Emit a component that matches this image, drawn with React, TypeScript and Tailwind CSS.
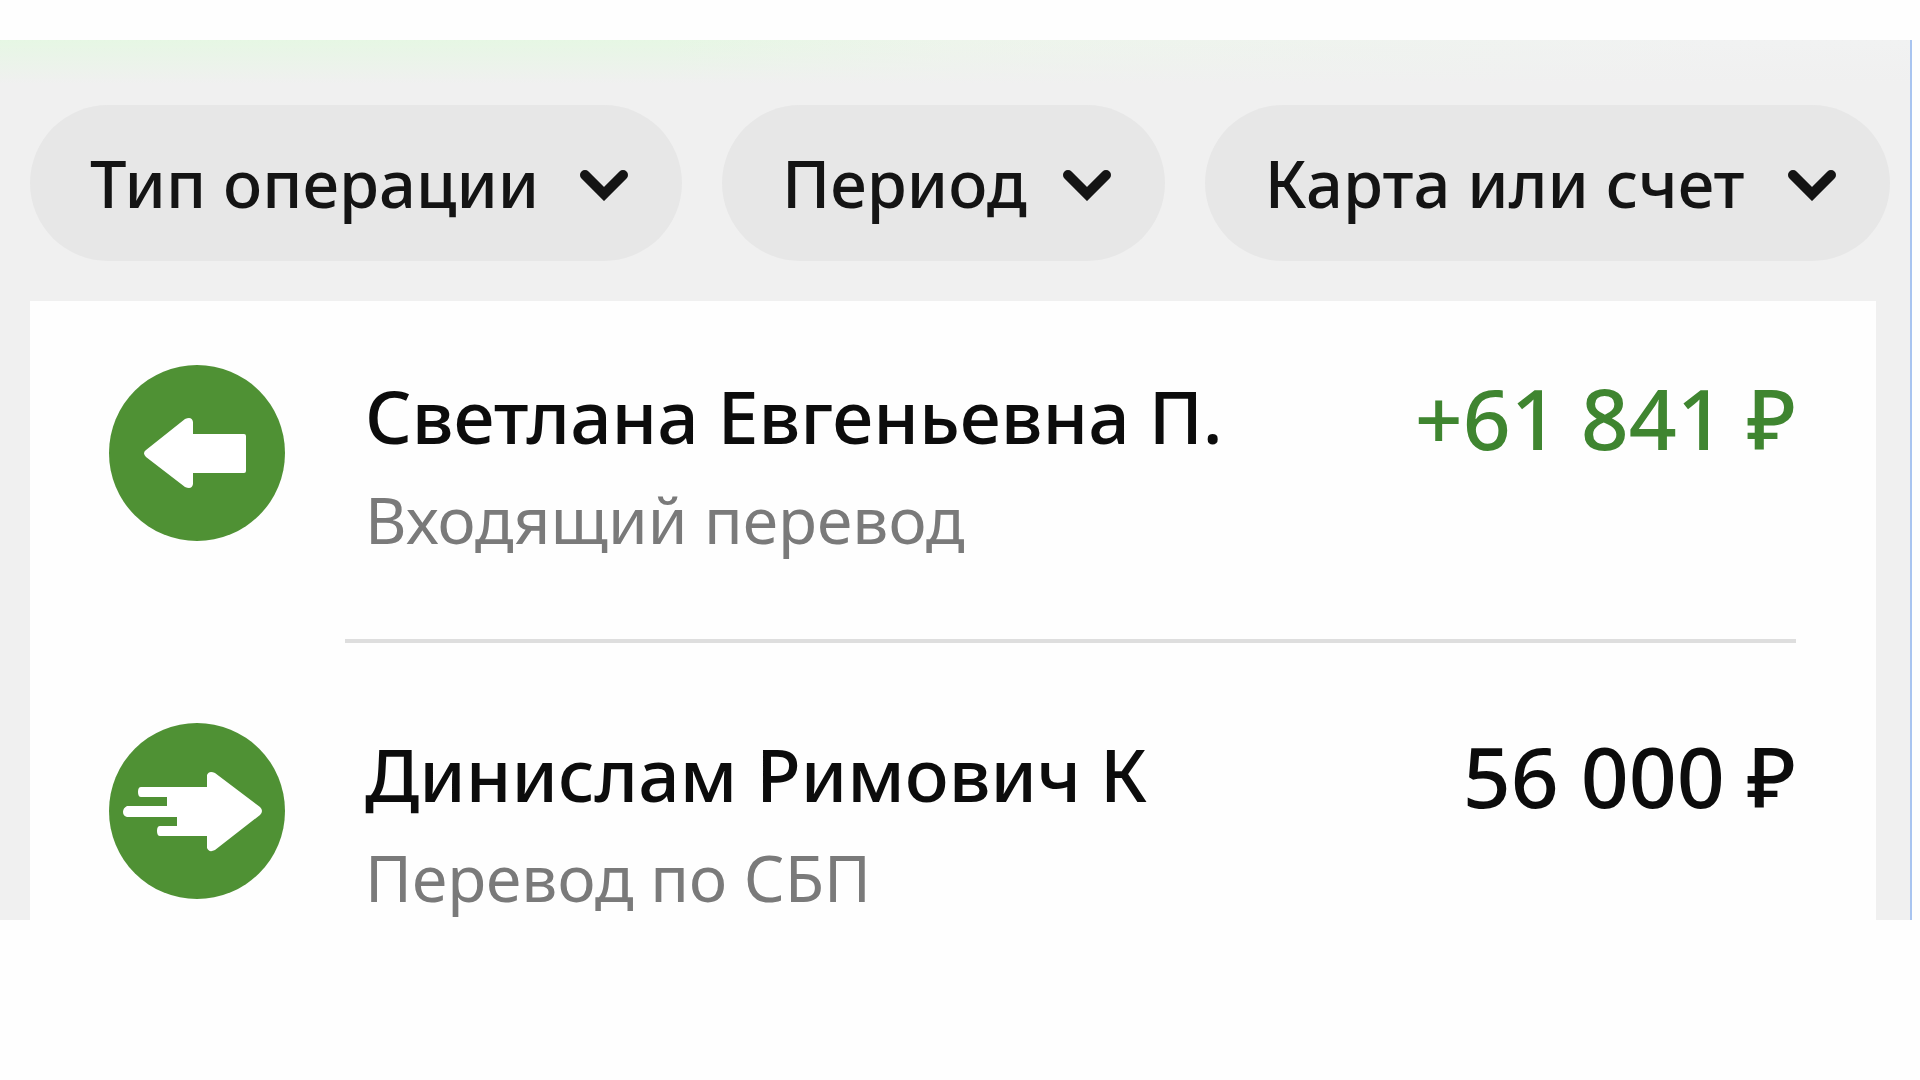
import type { ReactNode } from "react";

interface Operation {
  id: number;
  name: string;
  description: string;
  amount: string;
  income: boolean;
  icon: ReactNode;
}

const filters = ["Тип операции", "Период", "Карта или счет"];

function IncomingIcon() {
  return (
    <svg className="size-44 shrink-0" viewBox="0 0 176 176" aria-hidden="true">
      <circle cx="88" cy="88" r="88" fill="#4f9134" />
      <path
        d="M37 85 L76 54 Q83 51 84 57 V69 H135 Q137 69 137 71 V106 Q137 108 135 108 H84 V119 Q83 125 76 122 L37 92 Q33 88 37 85 Z"
        fill="#fff"
      />
    </svg>
  );
}

function FastTransferIcon() {
  return (
    <svg className="size-44 shrink-0" viewBox="0 0 176 176" aria-hidden="true">
      <circle cx="88" cy="88" r="88" fill="#4f9134" />
      <path
        d="M32 64 H98 V52 Q100 47 106 50 L151 84 Q155 88 151 92 L106 127 Q100 130 98 125 V113 H51 Q48 113 48 108 Q48 103 51 103 H68 V94 H18 Q14 93 14 89 Q14 85 18 83 H58 V74 H32 Q29 74 29 69 Q29 64 32 64 Z"
        fill="#fff"
      />
    </svg>
  );
}

function ChevronIcon() {
  return (
    <svg className="h-9 w-[50px] shrink-0" viewBox="0 0 50 36" fill="none" aria-hidden="true">
      <path d="M6 10 L25 29 L44 10" stroke="currentColor" strokeWidth="10" strokeLinecap="round" />
    </svg>
  );
}

const operations: Operation[] = [
  {
    id: 1,
    name: "Светлана Евгеньевна П.",
    description: "Входящий перевод",
    amount: "+61 841 ₽",
    income: true,
    icon: <IncomingIcon />,
  },
  {
    id: 2,
    name: "Динислам Римович К",
    description: "Перевод по СБП",
    amount: "56 000 ₽",
    income: false,
    icon: <FastTransferIcon />,
  },
];

export default function App() {
  return (
    <div className="min-h-screen bg-[#fefefe] pt-10 pr-2 font-['Noto_Sans','Open_Sans',sans-serif]">
      <main className="border-r-2 border-[#a9c4f0] bg-linear-to-r from-[#e6f7e4] from-35% via-[#edf5eb] via-50% to-[#f1f2f2] to-90%">
        <div className="bg-linear-to-b from-transparent to-[#f0f0f0] to-[44px]">
          {/* Filters */}
          <div className="grid grid-cols-[651fr_442fr_684fr] gap-10 pt-[65px] pr-5 pl-[30px]">
            {filters.map((label) => (
              <button
                key={label}
                type="button"
                className="flex h-39 items-center justify-between rounded-full bg-[#e7e7e7] pr-[53px] pl-[60px] text-[65px] leading-20 font-medium whitespace-nowrap text-[#141414]"
              >
                {label}
                <ChevronIcon />
              </button>
            ))}
          </div>

          {/* Operations */}
          <ul className="mt-10 mr-[34px] ml-[30px] flex flex-col gap-4 bg-[#fefefe] pr-20 pl-[79px]">
            {operations.map((op) => (
              <li key={op.id} className="group flex gap-[60px] pt-16">
                {op.icon}
                <div className="flex flex-1 items-start justify-between border-[#dedede] pt-[11px] pb-2.5 pl-5 group-not-last:border-b-4 group-not-last:pb-[87px]">
                  <div>
                    <h2 className="text-[73px] leading-20 font-medium text-[#0c0c0c]">{op.name}</h2>
                    <p className="mt-8 text-[64px] leading-16 text-[#7a7a7a]">{op.description}</p>
                  </div>
                  <span
                    className={`text-[84px] leading-[84px] font-medium whitespace-nowrap ${op.income ? "text-[#3f8530]" : "text-[#0c0c0c]"}`}
                  >
                    {op.amount}
                  </span>
                </div>
              </li>
            ))}
          </ul>
        </div>
      </main>
    </div>
  );
}
